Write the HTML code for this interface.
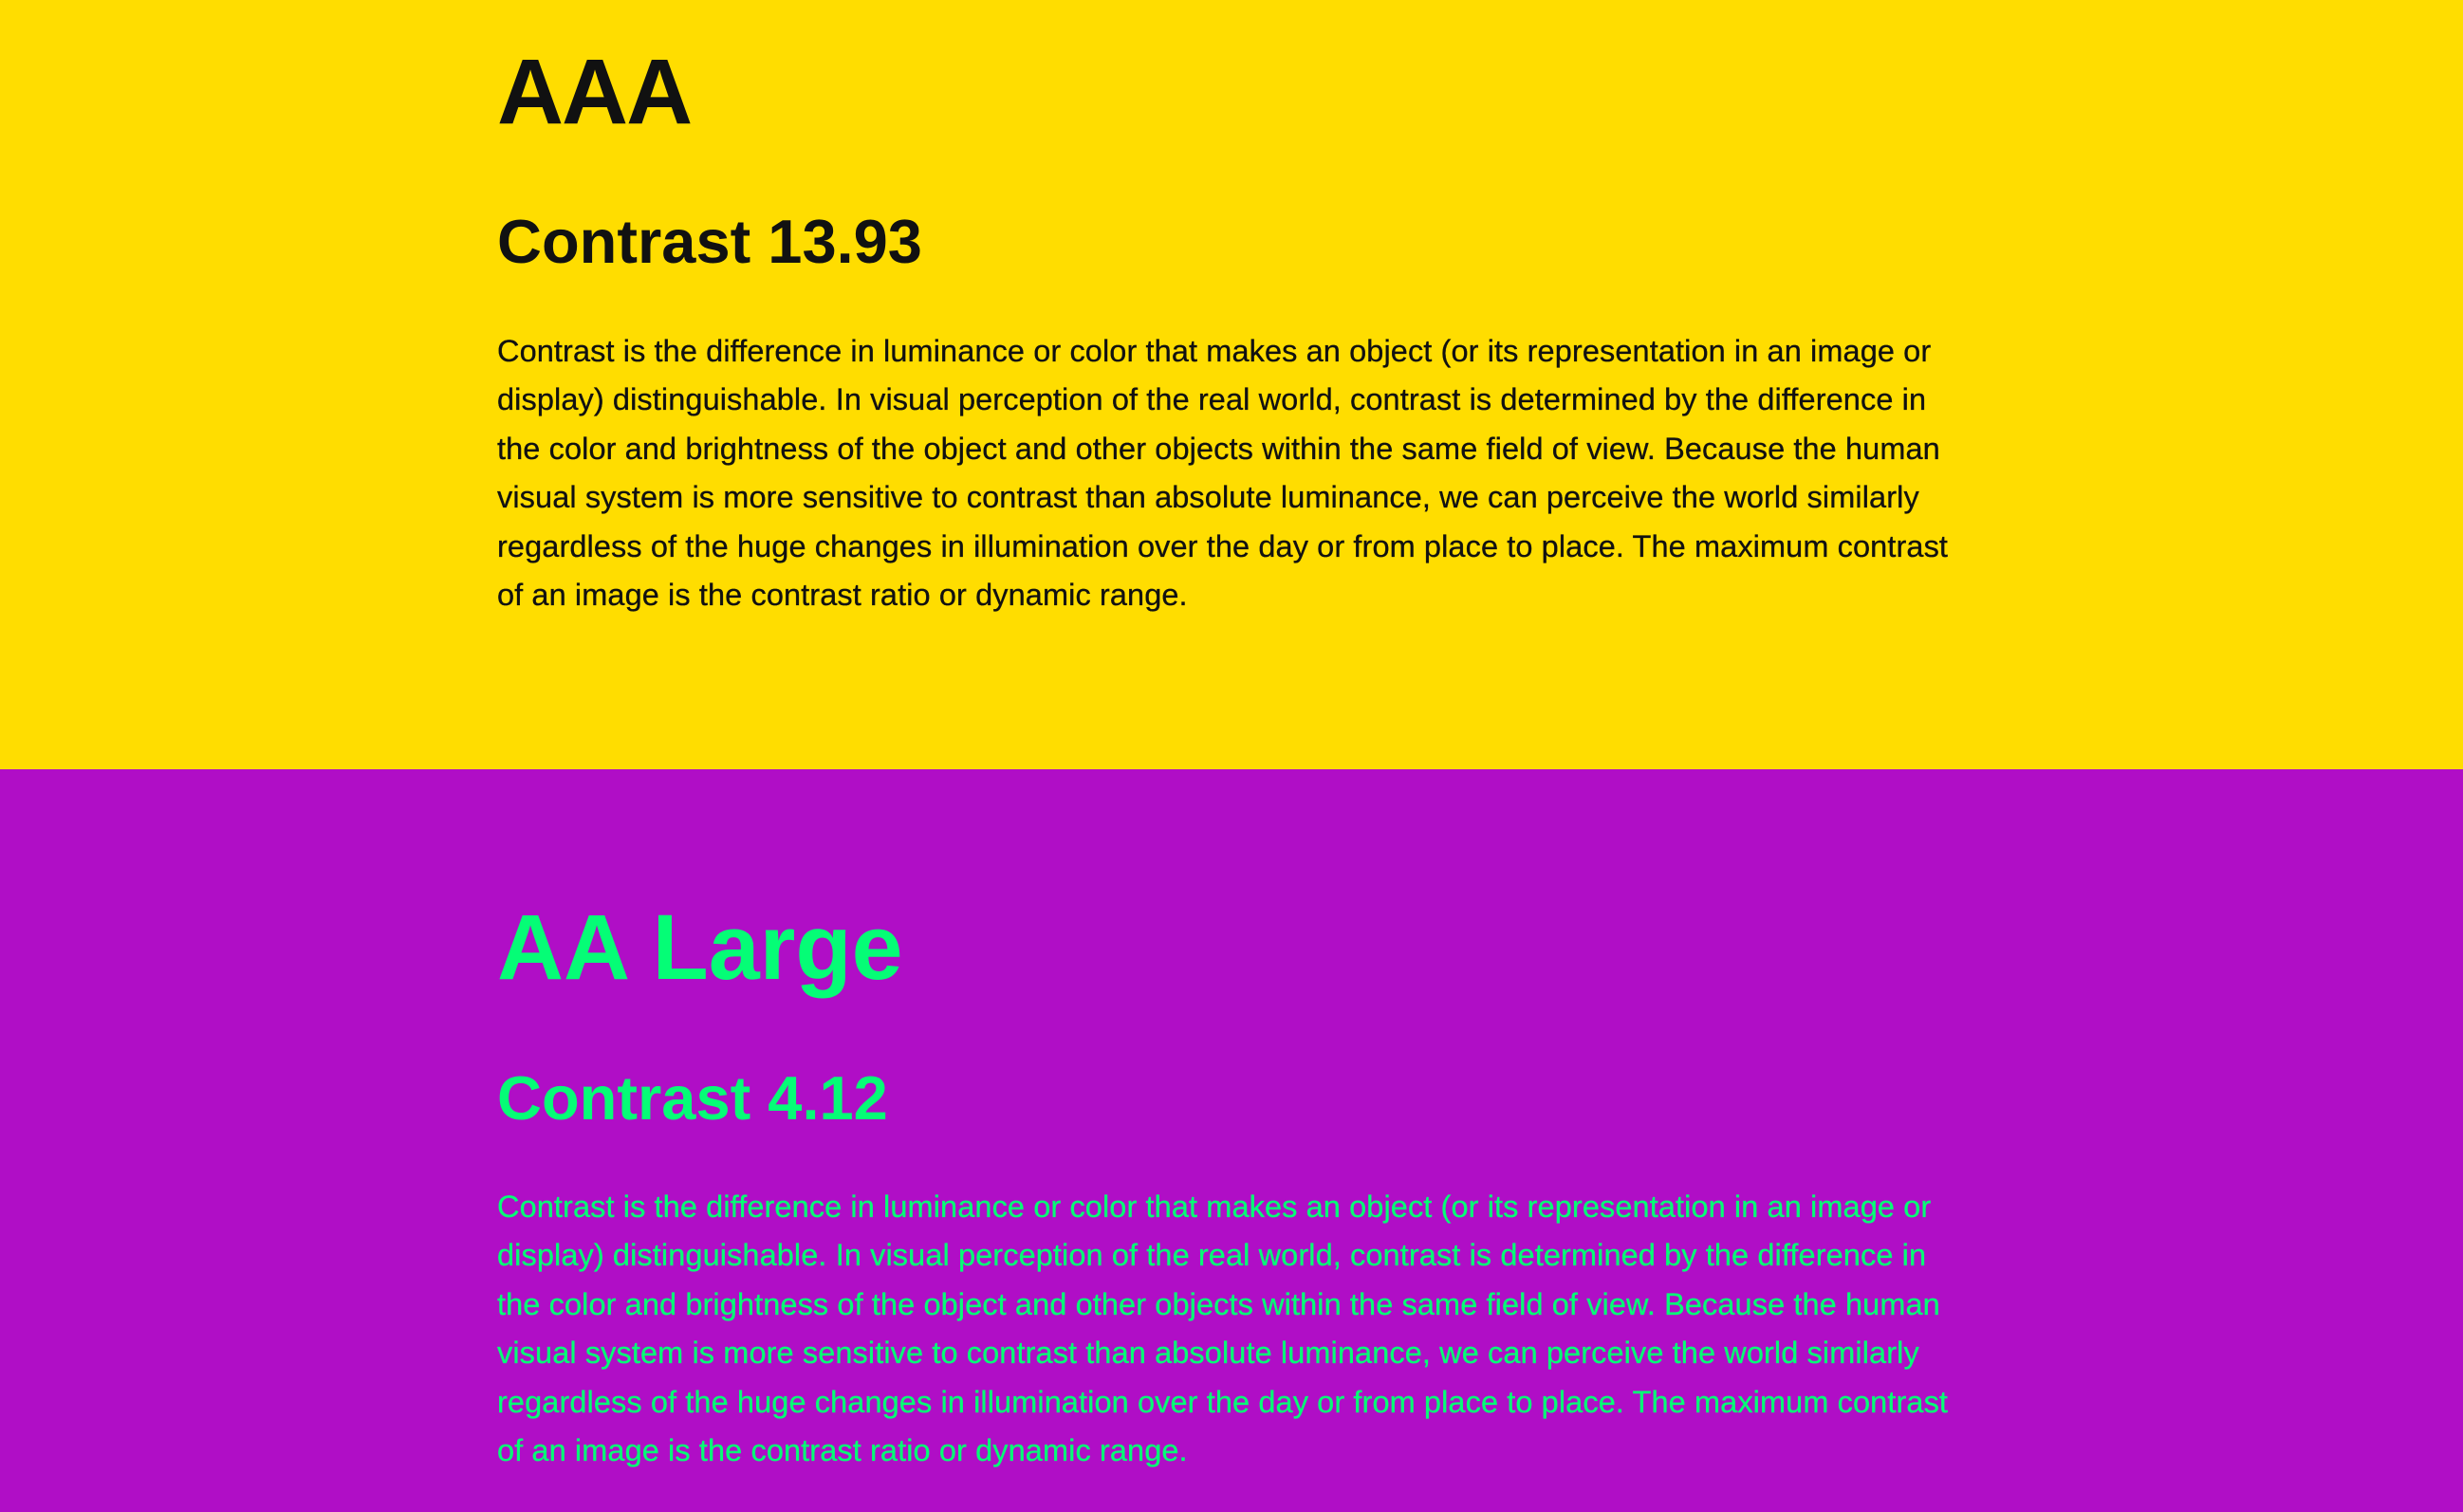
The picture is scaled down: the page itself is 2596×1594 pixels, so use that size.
<!DOCTYPE html>
<html><head><meta charset="utf-8"><style>
html,body{margin:0;padding:0;width:2596px;height:1594px;overflow:hidden;font-family:"Liberation Sans",Arial,sans-serif;}
.sec{position:absolute;left:0;width:2596px;}
.y{top:0;height:811px;background:#FFDD00;color:#111;}
.p{top:811px;height:783px;background:#B00EC6;color:#05FD76;}
.a{position:absolute;left:524px;margin:0;white-space:nowrap;}
.h1{font-size:97px;line-height:97px;font-weight:bold;}
.h2{font-size:65px;line-height:65px;font-weight:bold;}
.b{font-size:32.5px;line-height:51.4px;letter-spacing:0.1px;-webkit-text-stroke:0.3px currentColor;}
</style></head><body>
<div class="sec y"></div>
<div class="sec p"></div>
<div class="a h1" style="top:48px;color:#111;letter-spacing:-2px">AAA</div>
<div class="a h2" style="top:222px;color:#111">Contrast 13.93</div>
<div class="a b" style="top:345px;color:#111">Contrast is the difference in luminance or color that makes an object (or its representation in an image or<br>display) distinguishable. In visual perception of the real world, contrast is determined by the difference in<br>the color and brightness of the object and other objects within the same field of view. Because the human<br>visual system is more sensitive to contrast than absolute luminance, we can perceive the world similarly<br>regardless of the huge changes in illumination over the day or from place to place. The maximum contrast<br>of an image is the contrast ratio or dynamic range.</div>
<div class="a h1" style="top:950px;color:#05FD76">AA Large</div>
<div class="a h2" style="top:1125px;color:#05FD76">Contrast 4.12</div>
<div class="a b" style="top:1247px;color:#05FD76">Contrast is the difference in luminance or color that makes an object (or its representation in an image or<br>display) distinguishable. In visual perception of the real world, contrast is determined by the difference in<br>the color and brightness of the object and other objects within the same field of view. Because the human<br>visual system is more sensitive to contrast than absolute luminance, we can perceive the world similarly<br>regardless of the huge changes in illumination over the day or from place to place. The maximum contrast<br>of an image is the contrast ratio or dynamic range.</div>
</body></html>
